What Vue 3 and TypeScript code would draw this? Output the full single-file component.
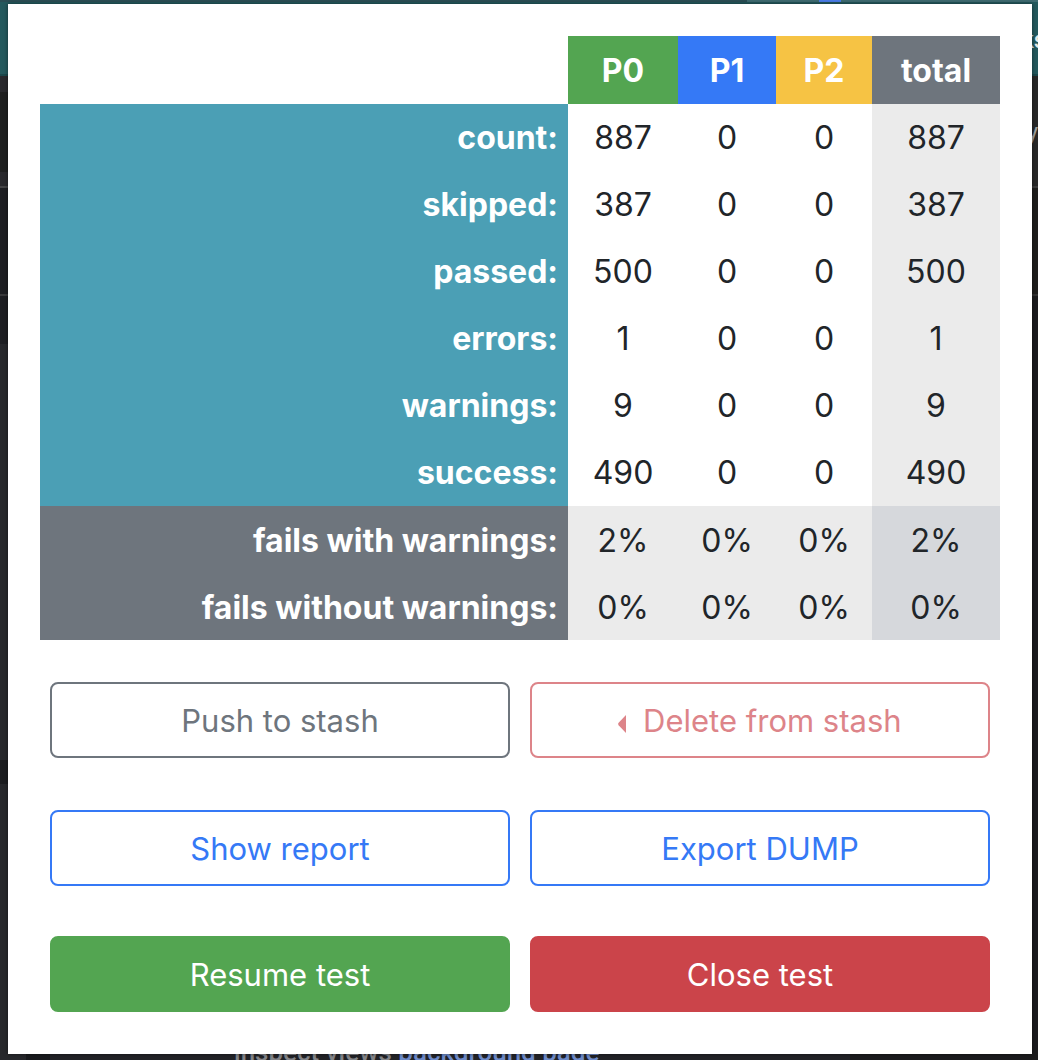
<script setup lang="ts">
interface Row {
  label: string
  values: string[]
  summary?: boolean
}

const columns = ['P0', 'P1', 'P2', 'total']

const rows: Row[] = [
  { label: 'count:', values: ['887', '0', '0', '887'] },
  { label: 'skipped:', values: ['387', '0', '0', '387'] },
  { label: 'passed:', values: ['500', '0', '0', '500'] },
  { label: 'errors:', values: ['1', '0', '0', '1'] },
  { label: 'warnings:', values: ['9', '0', '0', '9'] },
  { label: 'success:', values: ['490', '0', '0', '490'] },
  { label: 'fails with warnings:', values: ['2%', '0%', '0%', '2%'], summary: true },
  { label: 'fails without warnings:', values: ['0%', '0%', '0%', '0%'], summary: true },
]
</script>

<template>
  <div class="page">
    <div class="backdrop">
      <div class="tabs"><span class="tab-dark"></span><span class="tab-mark"></span></div>
      <div class="toolbar"><span class="toolbar-text">ks</span></div>
      <div class="body">
        <div class="rail">
          <div class="rail-item first"></div>
          <div class="rail-item second"></div>
          <div class="rail-item third"></div>
          <div class="rail-card"></div>
          <div class="rail-gap"></div>
          <div class="rail-card last"></div>
        </div>
        <div class="sheet">
          <p class="inspect">inspect views <a href="#">background page</a></p>
        </div>
        <div class="side">
          <div class="side-head">y</div>
          <div class="side-item"></div>
        </div>
      </div>
    </div>

    <main class="popup">
      <table class="stats">
        <colgroup>
          <col />
          <col class="col-p0" />
          <col class="col-p1" />
          <col class="col-p2" />
          <col class="col-total" />
        </colgroup>
        <thead>
          <tr>
            <td></td>
            <th v-for="c in columns" :key="c" scope="col" :class="'head-' + c.toLowerCase()">{{ c }}</th>
          </tr>
        </thead>
        <tbody>
          <tr v-for="row in rows" :key="row.label" :class="{ summary: row.summary }">
            <th scope="row">{{ row.label }}</th>
            <td v-for="(v, i) in row.values" :key="i">{{ v }}</td>
          </tr>
        </tbody>
      </table>

      <div class="actions stash">
        <button type="button" class="btn outline-secondary">Push to stash</button>
        <button type="button" class="btn outline-danger" disabled>
          <svg class="caret" viewBox="0 0 8 18" aria-hidden="true"><path d="M8 0V18L0.6 10.2Q-0.4 9 0.6 7.8Z" /></svg>
          Delete from stash
        </button>
      </div>
      <div class="actions report">
        <button type="button" class="btn outline-primary">Show report</button>
        <button type="button" class="btn outline-primary">Export DUMP</button>
      </div>
      <div class="actions run">
        <button type="button" class="btn success">Resume test</button>
        <button type="button" class="btn danger">Close test</button>
      </div>
    </main>
  </div>
</template>

<style>
body {
  margin: 0;
  background: #222327;
}
</style>

<style scoped>
.page {
  position: relative;
  overflow: hidden;
  padding: 4px 6px 6px 8px;
  font-family: Inter, "Liberation Sans", sans-serif;
}

.backdrop {
  position: absolute;
  inset: 0;
  display: flex;
  flex-direction: column;
}
.tabs {
  display: flex;
  height: 2px;
  background: #3f6b71;
}
.tab-dark {
  width: 72%;
  background: #2b4d54;
}
.tab-mark {
  width: 22px;
  margin-left: 72px;
  background: #4a7ce8;
}
.toolbar {
  display: flex;
  justify-content: flex-end;
  box-sizing: border-box;
  height: 74px;
  padding-top: 24px;
  border-bottom: 2px solid #1b484c;
  background: #24595d;
}
.toolbar-text {
  margin-right: -8px;
  color: #e4ebeb;
  font: 500 24px/28px Roboto, sans-serif;
}
.body {
  flex: 1;
  display: flex;
}
.rail {
  display: flex;
  flex-direction: column;
  width: 26px;
}
.rail-item {
  box-sizing: border-box;
  background: #1e1f23;
}
.rail-item.first {
  height: 110px;
  border-top: 16px solid #29292d;
  border-bottom: 14px solid #29292d;
  background: #1f2020;
}
.rail-item.second {
  height: 110px;
  border-top: 2px solid #454547;
  border-bottom: 2px solid #3a3a3c;
}
.rail-item.third {
  height: 48px;
}
.rail-card {
  height: 416px;
  background: #27282c;
}
.rail-gap {
  height: 24px;
  background: #1c1d20;
}
.rail-card.last {
  flex: 1;
  height: auto;
}
.sheet {
  flex: 1;
  display: flex;
  align-items: flex-end;
  overflow: hidden;
  border-left: 24px solid #1a1b1e;
  background: #222327;
}
.inspect {
  margin: 0 0 -8px 184px;
  color: #85868a;
  font: 500 26px/32px Roboto, sans-serif;
  white-space: nowrap;
}
.inspect a {
  color: #6f8ccb;
  text-decoration: none;
}
.side {
  width: 188px;
  background: #1c1c1e;
}
.side-head {
  box-sizing: border-box;
  height: 112px;
  padding-top: 42px;
  border-bottom: 2px solid #3c3c3c;
  background: #282828;
  color: #a0a0a0;
  font: 24px/28px Roboto, sans-serif;
  text-align: right;
}
.side-item {
  height: 106px;
  border-bottom: 2px solid #323232;
  background: #1f1e1d;
}

.popup {
  position: relative;
  padding: 32px 32px 42px;
  background: #fff;
  box-shadow: 0 0 4px rgba(0, 0, 0, 0.5);
}

.stats {
  width: 100%;
  table-layout: fixed;
  border-collapse: collapse;
  color: #212529;
  font-size: 32px;
  line-height: 48px;
  text-align: center;
}
.col-p0 { width: 110px; }
.col-p1 { width: 98px; }
.col-p2 { width: 96px; }
.col-total { width: 128px; }
.stats th,
.stats td {
  height: 67px;
  padding: 0;
}
.stats th {
  color: #fff;
  font-weight: 700;
}
.stats thead th {
  height: 66px;
  padding-top: 2px;
}
.stats .summary th,
.stats .summary td {
  height: 65px;
  padding-top: 2px;
}
.head-p0 { background: #53a551; }
.head-p1 { background: #3579f6; }
.head-p2 { background: #f6c344; }
.head-total { background: #6e757d; }
.stats tbody th {
  padding-right: 10px;
  background: #4b9fb5;
  text-align: right;
}
.stats tbody td:last-child,
.stats .summary td {
  background: #ebebeb;
}
.stats tbody .summary th {
  background: #6e757d;
}
.stats .summary td:last-child {
  background: #d6d8dc;
}

.actions {
  display: grid;
  grid-template-columns: 1fr 1fr;
  gap: 20px;
  padding: 0 10px;
}
.stash { margin-top: 42px; }
.report { margin-top: 52px; }
.run { margin-top: 50px; }

.btn {
  height: 76px;
  padding: 2px 24px 0;
  border: 2px solid currentColor;
  border-radius: 8px;
  background: #fff;
  font: 400 31px/48px Inter, "Liberation Sans", sans-serif;
}
.outline-secondary { color: #6e757d; }
.outline-primary { color: #3579f6; }
.outline-danger { color: #dd8489; }
.success {
  border-color: #53a551;
  background: #53a551;
  color: #fff;
}
.danger {
  border-color: #cb444a;
  background: #cb444a;
  color: #fff;
}
.caret {
  width: 8px;
  height: 18px;
  margin-right: 8px;
  vertical-align: -1px;
  fill: currentColor;
}
</style>
